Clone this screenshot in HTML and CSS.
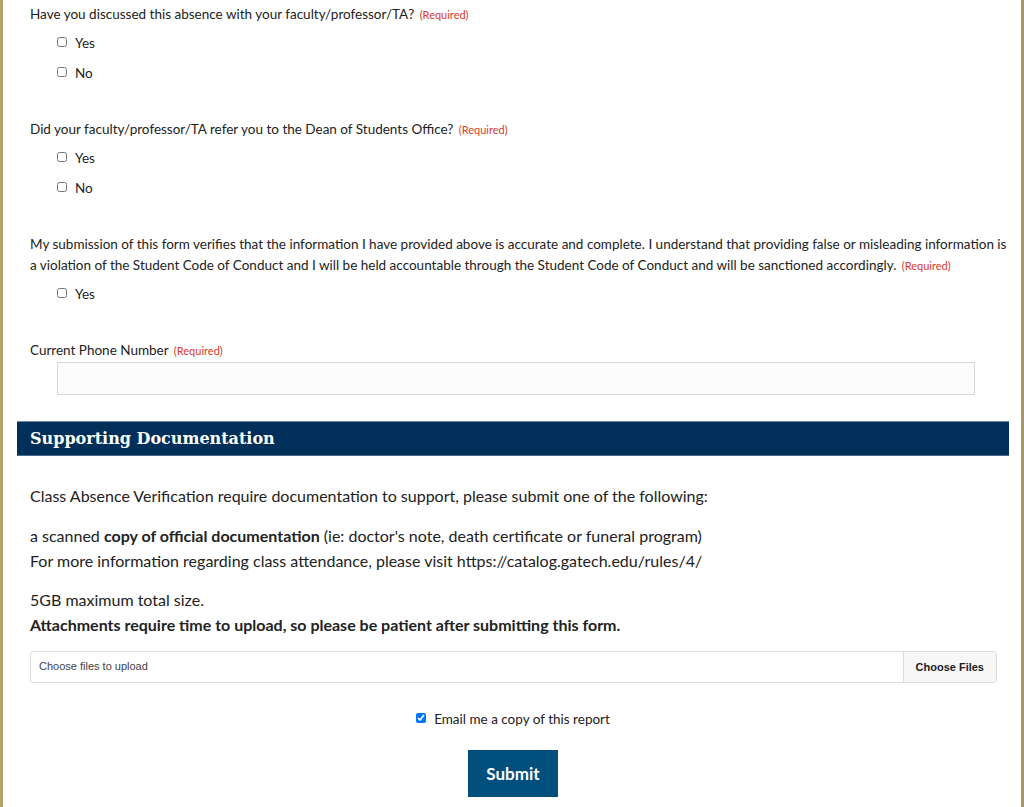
FILE: index.html
```html
<!DOCTYPE html>
<html lang="en">
<head>
    <meta charset="UTF-8">
    <title>Class Absence Verification</title>
    <link rel="stylesheet" href="styles.css">
</head>
<body>
    <div class="page">
        <form class="form">
            <div class="field">
                <p class="question">Have you discussed this absence with your faculty/professor/TA? <span class="req">(Required)</span></p>
                <label class="opt"><input type="checkbox"> Yes</label>
                <label class="opt"><input type="checkbox"> No</label>
            </div>

            <div class="field">
                <p class="question">Did your faculty/professor/TA refer you to the Dean of Students Office? <span class="req">(Required)</span></p>
                <label class="opt"><input type="checkbox"> Yes</label>
                <label class="opt"><input type="checkbox"> No</label>
            </div>

            <div class="field verify">
                <p class="question">My submission of this form verifies that the information I have provided above is accurate and complete. I understand that providing false or misleading information is a violation of the Student Code of Conduct and I will be held accountable through the Student Code of Conduct and will be sanctioned accordingly. <span class="req">(Required)</span></p>
                <label class="opt"><input type="checkbox"> Yes</label>
            </div>

            <div class="field phone">
                <p class="question">Current Phone Number <span class="req">(Required)</span></p>
                <input class="text" type="text">
            </div>

            <h2 class="section">Supporting Documentation</h2>

            <div class="docs">
                <p class="intro">Class Absence Verification require documentation to support, please submit one of the following:</p>
                <p>a scanned <b>copy of official documentation</b> (ie: doctor's note, death certificate or funeral program)<br>
                For more information regarding class attendance, please visit https://catalog.gatech.edu/rules/4/</p>
                <p>5GB maximum total size.<br>
                <b>Attachments require time to upload, so please be patient after submitting this form.</b></p>
            </div>

            <div class="upload">
                <span class="upload-text">Choose files to upload</span>
                <span class="upload-btn">Choose Files</span>
            </div>

            <label class="copy"><input type="checkbox" checked> Email me a copy of this report</label>

            <div class="actions">
                <button type="button" class="submit">Submit</button>
            </div>
        </form>
    </div>
</body>
</html>
```

FILE: styles.css
```css
html, body{
    margin: 0;
    padding: 0;
    background: #ffffff;
}
body{
    font-family: Lato, "Open Sans", sans-serif;
    color: #222222;
}
.page{
    height: 807px;
    overflow: hidden;
    border-left: 3px solid #b3a369;
    border-right: 3px solid #a39a6a;
    box-sizing: border-box;
    padding: 0 12px 0 14px;
}
.form{
    padding-top: 4px;
}

.field{
    padding-bottom: 31px;
}
.verify{
    padding-bottom: 31px;
}
.question{
    margin: 0 0 3px 13px;
    font-size: 13.5px;
    line-height: 21px;
}
.req{
    display: inline-block;
    margin-left: 2px;
    color: #d9392b;
    font-size: 11px;
    line-height: 14px;
}
.opt{
    display: flex;
    align-items: center;
    height: 30px;
    margin-left: 40px;
    font-size: 13.5px;
}
.opt input{
    width: 10px;
    height: 10px;
    margin: 0 8px 2px 0;
}

.phone{
    padding-bottom: 26px;
}
.phone .question{
    margin-bottom: 1px;
}
.text{
    display: block;
    box-sizing: border-box;
    width: 918px;
    height: 33px;
    margin-left: 40px;
    border: 1px solid #d8d8d8;
    background: #fcfcfc;
}

.section{
    margin: 0;
    height: 35px;
    line-height: 34px;
    padding-left: 13px;
    background: #002f5a;
    border-top: 1px solid #6f8aa8;
    border-bottom: 1px solid #4a6b8c;
    box-sizing: border-box;
    color: #ffffff;
    font-family: "DejaVu Serif", serif;
    font-size: 16px;
    font-weight: bold;
}

.docs{
    padding: 27px 0 0 13px;
    font-size: 16px;
    line-height: 25px;
}
.docs p{
    margin: 0 0 14px 0;
}
.docs .intro{
    margin-bottom: 15px;
}

.upload{
    display: flex;
    margin: 11px 12px 0 13px;
    height: 30px;
    border: 1px solid #dcdcdc;
    border-radius: 3px;
    font-family: "Liberation Sans", sans-serif;
    font-size: 11px;
}
.upload-text{
    flex: 1;
    padding-left: 8px;
    line-height: 28px;
    color: #444444;
}
.upload-btn{
    padding: 0 12px;
    line-height: 30px;
    border-left: 1px solid #dcdcdc;
    background: #f7f7f7;
    font-weight: bold;
    color: #222222;
}

.copy{
    display: flex;
    justify-content: center;
    align-items: center;
    margin-top: 28px;
    font-size: 13.5px;
}
.copy input{
    width: 10px;
    height: 10px;
    margin: 0 8px 2px 0;
}

.actions{
    display: flex;
    justify-content: center;
    margin-top: 23px;
}
.submit{
    width: 90px;
    height: 47px;
    background: #004f7c;
    border: none;
    color: #ffffff;
    font-family: Lato, sans-serif;
    font-weight: bold;
    font-size: 17px;
}
```
